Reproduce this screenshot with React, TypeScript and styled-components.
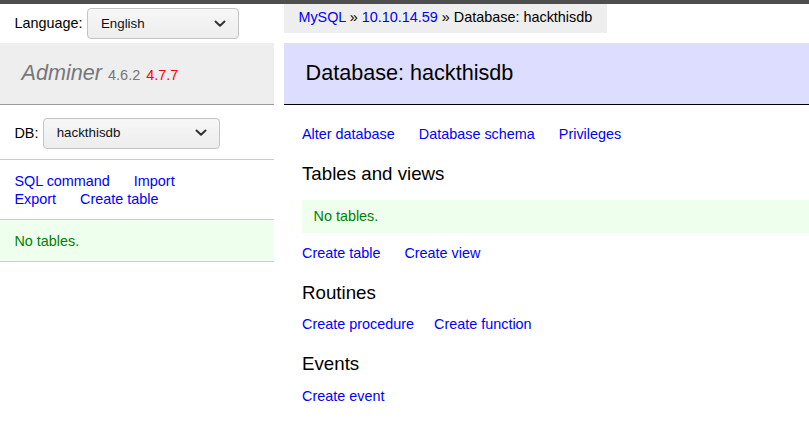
import React from "react";
import styled, { createGlobalStyle } from "styled-components";

const Global = createGlobalStyle`
  html, body { margin: 0; padding: 0; background: #fff; }
  body {
    color: #000;
    font: 14.4px/1.25 "Liberation Sans", Arial, Helvetica, sans-serif;
    overflow: hidden;
    width: 809px;
    height: 447px;
  }
`;

const TopBar = styled.div`
  height: 4px;
  background: #4e4e4e;
`;

const Layout = styled.div`
  display: grid;
  grid-template-columns: 274px 1fr;
  grid-template-rows: 38.5px auto;
  column-gap: 10px;
`;

const Lang = styled.div`
  display: flex;
  align-items: flex-start;
  gap: 4.5px;
  padding: 4px 14.4px 0;
  line-height: 31px;
`;

const Breadcrumb = styled.div`
  justify-self: start;
  align-self: start;
  background: #eee;
  height: 28.8px;
  line-height: 27.5px;
  padding: 0 14.4px;
  white-space: nowrap;
`;

const Link = styled.a`
  color: blue;
  text-decoration: none;
  cursor: pointer;
`;

const SelectBox = styled.div<{ $w: number }>`
  box-sizing: border-box;
  width: ${(p) => p.$w}px;
  height: 31px;
  display: flex;
  align-items: center;
  justify-content: space-between;
  padding: 0 12px 0 13px;
  border: 1px solid #c3c3c3;
  border-radius: 4px;
  background: linear-gradient(#f7f7f7, #ededed);
  font-size: 13.33px;
  line-height: 1.2;
  color: #111;
`;

const Chevron = () => (
  <svg width="12" height="8" viewBox="0 0 12 8" aria-hidden="true">
    <path d="M1.5 1.5 L6 5.8 L10.5 1.5" fill="none" stroke="#333" strokeWidth="2" strokeLinecap="round" strokeLinejoin="round" />
  </svg>
);

const Select = ({ value, width }: { value: string; width: number }) => (
  <SelectBox $w={width}>
    <span>{value}</span>
    <Chevron />
  </SelectBox>
);

const Menu = styled.div`
  display: flex;
  flex-direction: column;
`;

const H1 = styled.h1`
  margin: 0;
  font-size: 21.6px;
  line-height: 1.25;
  font-weight: normal;
  padding: 17.28px 21.6px;
  background: #eee;
  color: #777;
  border-bottom: 1px solid #999;
`;

const Brand = styled.span`
  font-style: italic;
  color: #777;
`;

const Version = styled.span<{ $new?: boolean }>`
  font-size: 14.47px;
  color: ${(p) => (p.$new ? "red" : "#777")};
`;

const MenuBlock = styled.div<{ $msg?: boolean }>`
  padding: 11.52px 14.4px;
  border-bottom: 1px solid #ccc;
  background: ${(p) => (p.$msg ? "#efe" : "transparent")};
  color: ${(p) => (p.$msg ? "green" : "inherit")};
`;

const DbRow = styled(MenuBlock)`
  display: flex;
  align-items: center;
  gap: 4.3px;
  padding-top: 12.5px;
  padding-bottom: 10.8px;
`;

const Links = styled.div<{ $mt?: number }>`
  margin-top: ${(p) => p.$mt ?? 0}px;
  & > a {
    white-space: nowrap;
    margin-right: 20px;
  }
`;

const Content = styled.div`
  display: flex;
  flex-direction: column;
`;

const H2 = styled.h2`
  margin: 0 0 20px 0;
  font-size: 21.6px;
  line-height: 1.25;
  font-weight: normal;
  padding: 17.28px 21.6px;
  background: #ddf;
  color: #000;
  border-bottom: 1px solid #000;
`;

const Body = styled.div`
  padding: 0 0 20px 18px;
`;

const H3 = styled.h3<{ $mt: number }>`
  margin: ${(p) => p.$mt}px 0 0;
  font-size: 18.72px;
  line-height: 1.25;
  font-weight: normal;
`;

const Message = styled.div`
  margin-top: 15.4px;
  padding: 7.2px 11.52px;
  background: #efe;
  color: green;
`;

export default function App() {
  return (
    <>
      <Global />
      <TopBar />
      <Layout>
        <Lang>
          <span>Language:</span>
          <Select value="English" width={152} />
        </Lang>
        <Breadcrumb>
          <Link>MySQL</Link> » <Link>10.10.14.59</Link> » Database: hackthisdb
        </Breadcrumb>
        <Menu>
          <H1>
            <Brand>Adminer</Brand> <Version>4.6.2</Version> <Version $new>4.7.7</Version>
          </H1>
          <DbRow>
            <span>DB:</span>
            <Select value="hackthisdb" width={177} />
          </DbRow>
          <MenuBlock>
            <Links>
              <Link>SQL command</Link> <Link>Import</Link>
              <br />
              <Link>Export</Link> <Link>Create table</Link>
            </Links>
          </MenuBlock>
          <MenuBlock $msg>No tables.</MenuBlock>
        </Menu>
        <Content>
          <H2>Database: hackthisdb</H2>
          <Body>
            <Links>
              <Link>Alter database</Link> <Link>Database schema</Link> <Link>Privileges</Link>
            </Links>
            <H3 $mt={18.5}>Tables and views</H3>
            <Message>No tables.</Message>
            <Links $mt={11.5}>
              <Link>Create table</Link> <Link>Create view</Link>
            </Links>
            <H3 $mt={18.5}>Routines</H3>
            <Links $mt={10.5}>
              <Link>Create procedure</Link>
              <Link>Create function</Link>
            </Links>
            <H3 $mt={19.5}>Events</H3>
            <Links $mt={12}>
              <Link>Create event</Link>
            </Links>
          </Body>
        </Content>
      </Layout>
    </>
  );
}
